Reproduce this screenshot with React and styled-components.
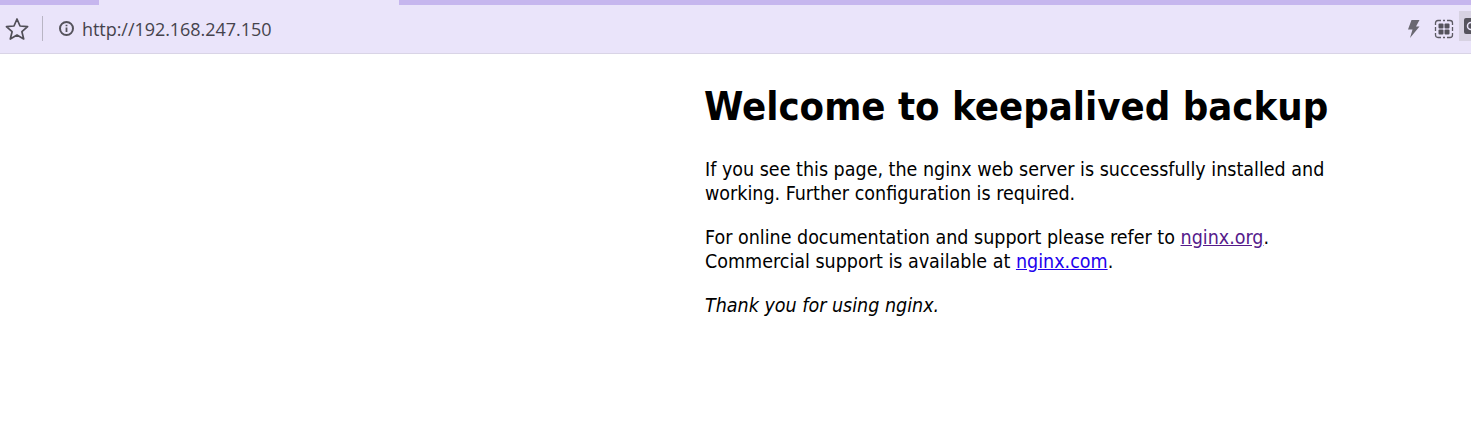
import React from "react";
import styled, { createGlobalStyle } from "styled-components";

const Global = createGlobalStyle`
  html, body { margin: 0; padding: 0; background: #fff; }
  body { width: 1471px; height: 425px; overflow: hidden; }
`;

const Browser = styled.div`
  width: 1471px;
  height: 425px;
  overflow: hidden;
  display: flex;
  flex-direction: column;
`;

const TabStrip = styled.div`
  height: 5px;
  display: flex;
  background: #c6b6ee;
`;

const ActiveTab = styled.div`
  width: 300px;
  margin-left: 99px;
  background: #eae4fa;
`;

const Toolbar = styled.div`
  height: 49px;
  box-sizing: border-box;
  border-bottom: 1px solid #d9d4e6;
  background: #eae4fa;
  display: flex;
  align-items: center;
  padding: 0 0 1px 5px;
`;

const Divider = styled.div`
  width: 1px;
  height: 25px;
  margin: 0 15px 0 13px;
  background: #b9b5c4;
`;

const Url = styled.span`
  margin-left: 7px;
  font: 18px "Open Sans", "Noto Sans", sans-serif;
  letter-spacing: -0.05px;
  color: #45434c;
`;

const RightTools = styled.div`
  margin-left: auto;
  display: flex;
  align-items: center;
  align-self: stretch;
`;

const ToolIcon = styled.svg`
  display: block;
  margin-right: ${(p) => p.$gap}px;
`;

const ActiveTool = styled.div`
  width: 12px;
  height: 30px;
  margin-top: -5px;
  box-sizing: border-box;
  padding: 7px 0 0 5px;
  background: #d7d2e2;
  overflow: hidden;
`;

const Page = styled.main`
  box-sizing: border-box;
  width: 630px;
  margin-left: 705px;
  padding-top: 28px;
  color: #000;
  font: 19.5px/24px "DejaVu Sans Condensed", "DejaVu Sans", sans-serif;
`;

const Heading = styled.h1`
  margin: 0 0 28px -1px;
  font-size: 39.7px;
  line-height: 48px;
  font-weight: 700;
  white-space: nowrap;
`;

const Para = styled.p`
  margin: 0 0 20px;
  white-space: nowrap;
`;

const Link = styled.a`
  color: ${(p) => (p.$visited ? "#551a8b" : "#2200ee")};
  text-decoration: underline;
`;

export default function App() {
  return (
    <Browser>
      <Global />
      <TabStrip>
        <ActiveTab />
      </TabStrip>
      <Toolbar>
        <svg width="24" height="24" viewBox="0 0 24 24" fill="none" stroke="#504e57" strokeWidth="1.7" strokeLinejoin="round">
          <path d="M12 2 15 9 22.600 9.700 16.900 14.700 18.700 22 12 18.100 5.300 22 7.100 14.700 1.400 9.700 9 9Z" />
        </svg>
        <Divider />
        <svg width="17" height="17" viewBox="0 0 17 17" fill="none">
          <circle cx="8.500" cy="8.500" r="6.500" stroke="#55535c" strokeWidth="2" />
          <path d="M8.500 7.500V12M8.500 4.800V6.300" stroke="#55535c" strokeWidth="1.800" />
        </svg>
        <Url>http://192.168.247.150</Url>
        <RightTools>
          <ToolIcon $gap={14} width="13" height="20" viewBox="0 0 13 20">
            <path d="M4.500 1H12.500L9 7.500H12.500L3 19 5.500 10.500H1Z" fill="#6a6871" />
          </ToolIcon>
          <ToolIcon $gap={5} width="20" height="20" viewBox="0 0 20 20" fill="none">
            <path d="M1.500 6V4Q1.500 1.500 4 1.500H7M13 1.500H16Q18.500 1.500 18.500 4V6M18.500 14V16Q18.500 18.500 16 18.500H13M7 18.500H4Q1.500 18.500 1.500 16V14M1.500 8V12M18.500 8V12M9 1.500H11M9 18.500H11" stroke="#5c5a63" strokeWidth="1.300" />
            <rect x="4.500" y="4.500" width="5" height="5" rx="1" fill="#55535c" />
            <rect x="10.500" y="4.500" width="5" height="5" rx="1" fill="#55535c" />
            <rect x="4.500" y="10.500" width="5" height="5" rx="1" fill="#55535c" />
            <rect x="10.500" y="10.500" width="5" height="5" rx="1" fill="#55535c" />
          </ToolIcon>
          <ActiveTool>
            <svg width="16" height="16" viewBox="0 0 16 16" fill="none">
              <rect width="16" height="16" rx="2" fill="#55535c" />
              <circle cx="7" cy="8" r="3.500" stroke="#e9e3f9" strokeWidth="1.500" />
            </svg>
          </ActiveTool>
        </RightTools>
      </Toolbar>
      <Page>
        <Heading>Welcome to keepalived backup</Heading>
        <Para>
          If you see this page, the nginx web server is successfully installed and
          <br />
          working. Further configuration is required.
        </Para>
        <Para>
          For online documentation and support please refer to <Link $visited href="#">nginx.org</Link>.
          <br />
          Commercial support is available at <Link href="#">nginx.com</Link>.
        </Para>
        <Para>
          <em>Thank you for using nginx.</em>
        </Para>
      </Page>
    </Browser>
  );
}
